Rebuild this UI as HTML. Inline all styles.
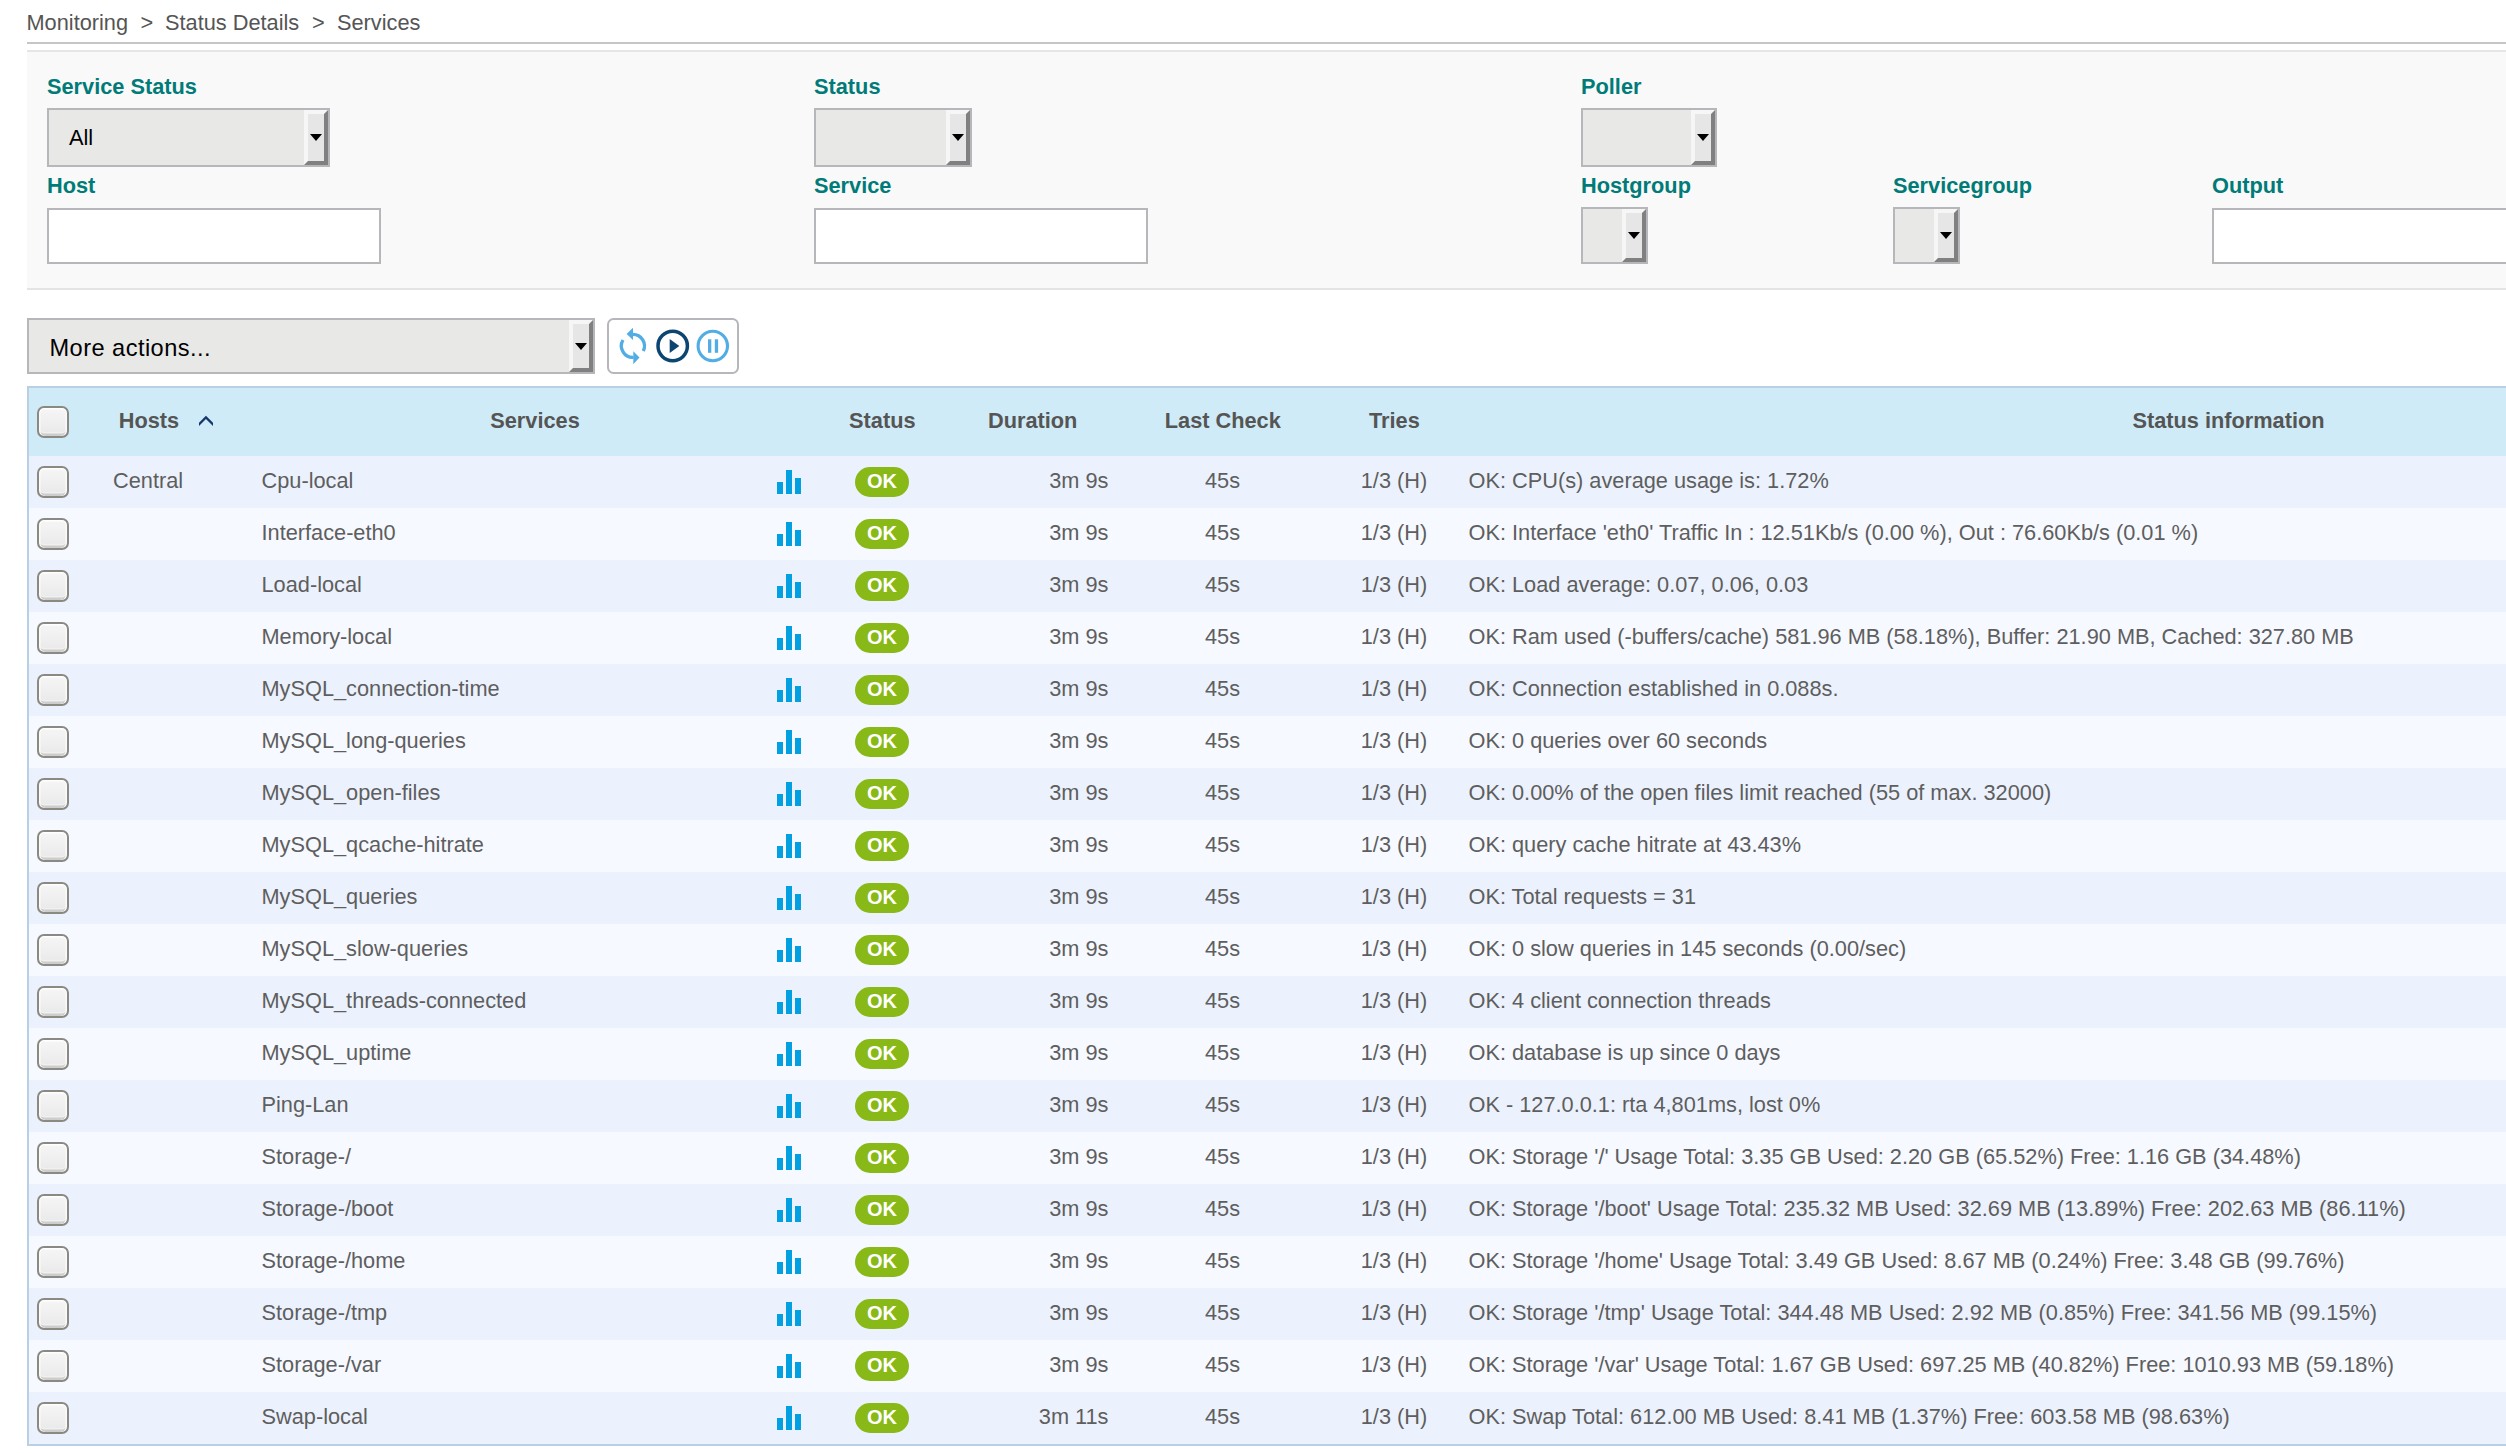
<!DOCTYPE html><html><head><meta charset='utf-8'><style>
*{margin:0;padding:0;box-sizing:border-box}
html,body{width:2506px;height:1453px;overflow:hidden;background:#fff}
body{position:relative;font-family:"Liberation Sans",sans-serif;font-size:21.75px;color:#5e5e5e}
.a{position:absolute;white-space:nowrap}
.lbl{position:absolute;white-space:nowrap;font-weight:bold;color:#007b78;line-height:24px}
.sel{position:absolute;background:#e8e8e7;border:2.5px solid #b5b7bb}
.sel .btn{position:absolute;right:0;top:0;bottom:0;width:24px;background:#e6e6e6;border-style:solid;border-width:4px 4px 4px 4px;border-color:#f6f6f6 #808080 #808080 #f6f6f6}
.sel .arr{position:absolute;left:50%;top:50%;margin-left:-6.5px;margin-top:-3.5px;width:0;height:0;border-left:6.5px solid transparent;border-right:6.5px solid transparent;border-top:7.5px solid #000}
.inp{position:absolute;background:#fff;border:2.5px solid #b5b7bb}
.cb{position:absolute;width:32px;height:32px;border:2.2px solid #8a8a83;border-radius:7px;background:linear-gradient(#f6f6f6,#eeeeee 60%,#e8e8e8);box-shadow:inset 0 1.5px 0 #fff,inset 1.5px 0 0 #fafafa,inset -1.5px 0 0 #fafafa,inset 0 -2.5px 0 #cdcdcd,inset 0 -4px 0 #f0f0f0}
.row{position:absolute;left:29px;width:2477px;height:52px}
.t{position:absolute;white-space:nowrap;line-height:24px}
.hd{position:absolute;white-space:nowrap;line-height:24px;font-weight:bold;color:#555}
.ok{position:absolute;width:54px;height:30px;border-radius:15px;background:#88b917;color:#fff;font-weight:bold;font-size:20px;line-height:28.5px;text-align:center}
.bars{position:absolute;width:24px;height:24px}
.bars i{position:absolute;bottom:0;width:6px;background:#02a0e0}
</style></head><body>
<div class='a' style='left:26.5px;top:11px;line-height:24px;color:#555'>Monitoring</div>
<div class='a' style='left:140.5px;top:11px;line-height:24px;color:#555'>&gt;</div>
<div class='a' style='left:165px;top:11px;line-height:24px;color:#555'>Status Details</div>
<div class='a' style='left:312px;top:11px;line-height:24px;color:#555'>&gt;</div>
<div class='a' style='left:337px;top:11px;line-height:24px;color:#555'>Services</div>
<div class='a' style='left:27px;top:42px;width:2479px;height:2px;background:#c6c6c6'></div>
<div class='a' style='left:27px;top:50px;width:2479px;height:240px;background:#f9f9f9;border-top:2px solid #e6e6e6;border-bottom:2px solid #e4e4e4'></div>
<div class='lbl' style='left:47px;top:75px'>Service Status</div>
<div class='lbl' style='left:814px;top:75px'>Status</div>
<div class='lbl' style='left:1581px;top:75px'>Poller</div>
<div class='lbl' style='left:47px;top:174px'>Host</div>
<div class='lbl' style='left:814px;top:174px'>Service</div>
<div class='lbl' style='left:1581px;top:174px'>Hostgroup</div>
<div class='lbl' style='left:1893px;top:174px'>Servicegroup</div>
<div class='lbl' style='left:2212px;top:174px'>Output</div>
<div class='sel' style='left:47px;top:108px;width:283px;height:59px'><div class='t' style='left:20px;top:16.0px;color:#000'>All</div><div class='btn'><div class='arr'></div></div></div>
<div class='sel' style='left:814px;top:108px;width:158px;height:59px'><div class='btn'><div class='arr'></div></div></div>
<div class='sel' style='left:1581px;top:108px;width:136px;height:59px'><div class='btn'><div class='arr'></div></div></div>
<div class='sel' style='left:1581px;top:207px;width:67px;height:57px'><div class='btn'><div class='arr'></div></div></div>
<div class='sel' style='left:1893px;top:207px;width:67px;height:57px'><div class='btn'><div class='arr'></div></div></div>
<div class='inp' style='left:47px;top:208px;width:334px;height:56px'></div>
<div class='inp' style='left:814px;top:208px;width:334px;height:56px'></div>
<div class='inp' style='left:2212px;top:208px;width:400px;height:56px'></div>
<div class='sel' style='left:27px;top:318px;width:568px;height:56px'><div class='t' style='left:20.5px;top:16px;color:#000;font-size:23.6px;letter-spacing:0.45px'>More actions...</div><div class='btn'><div class='arr'></div></div></div>
<div class='a' style='left:607px;top:318px;width:132px;height:56px;border:2px solid #b5b7bb;border-radius:6.5px;background:#fff'></div>
<svg class='a' style='left:607px;top:318px' width='132' height='56' viewBox='0 0 132 56'>
 <g fill='none' stroke='#52ade4' stroke-width='3.3'>
  <path d='M25.9 16.4 A11.5 11.5 0 0 1 36.2 33.1'/>
  <path d='M26.6 39.4 A11.5 11.5 0 0 1 16.0 22.0'/>
 </g>
 <path d='M26 9.7 L19.6 16.1 L26 22.1 Z' fill='#52ade4'/>
 <path d='M26.3 33.2 L32.5 39.4 L26.3 46.3 Z' fill='#52ade4'/>
 <circle cx='65.7' cy='28' r='14.7' fill='none' stroke='#0c4570' stroke-width='3.5'/>
 <path d='M62.7 21 L72.3 28 L62.7 35 Z' fill='#0c4570'/>
 <circle cx='105.8' cy='28' r='14.7' fill='none' stroke='#52ade4' stroke-width='3.1'/>
 <rect x='101' y='21.3' width='3.3' height='13.5' fill='#52ade4'/>
 <rect x='107.8' y='21.3' width='3.3' height='13.5' fill='#52ade4'/>
</svg>
<div class='a' style='left:27px;top:386px;width:2479px;height:1060px;border-left:2px solid #b9cfe4;border-top:2px solid #b9cfe4;border-bottom:2px solid #b9cfe4;background:#fff'></div>
<div class='a' style='left:29px;top:388px;width:2477px;height:68px;background:#cfebf7'></div>
<div class='cb' style='left:37px;top:406px'></div>
<div class='hd' style='left:118.7px;top:408.6px'>Hosts</div>
<svg class='a' style='left:197px;top:414px' width='18' height='14' viewBox='0 0 18 14'><path d='M2 12 L2 8.7 L8.95 1.7 L16 8.7 L16 12 L8.95 5 Z' fill='#15376c'/></svg>
<div class='hd' style='left:235px;width:600px;text-align:center;top:408.6px'>Services</div>
<div class='hd' style='left:582.3px;width:600px;text-align:center;top:408.6px'>Status</div>
<div class='hd' style='left:732.7px;width:600px;text-align:center;top:408.6px'>Duration</div>
<div class='hd' style='left:922.8px;width:600px;text-align:center;top:408.6px'>Last Check</div>
<div class='hd' style='left:1094.4px;width:600px;text-align:center;top:408.6px'>Tries</div>
<div class='hd' style='left:1928.5px;width:600px;text-align:center;top:408.6px'>Status information</div>
<div class='a' style='left:29px;top:456px;width:2477px;height:52px;background:#ecf2fd'></div>
<div class='cb' style='left:37px;top:466px'></div>
<div class='t' style='left:113px;top:469px'>Central</div>
<div class='t' style='left:261.5px;top:469px'>Cpu-local</div>
<div class='bars' style='left:777px;top:470px'><i style='left:0;height:12px'></i><i style='left:9px;height:24px'></i><i style='left:18px;height:16.5px'></i></div>
<div class='ok' style='left:855px;top:467px'>OK</div>
<div class='t' style='left:900px;width:208.5px;text-align:right;top:469px'>3m 9s</div>
<div class='t' style='left:1122.5px;width:200px;text-align:center;top:469px'>45s</div>
<div class='t' style='left:1294px;width:200px;text-align:center;top:469px'>1/3 (H)</div>
<div class='t' style='left:1468.5px;top:469px'>OK: CPU(s) average usage is: 1.72%</div>
<div class='a' style='left:29px;top:508px;width:2477px;height:52px;background:#f6f9ff'></div>
<div class='cb' style='left:37px;top:518px'></div>
<div class='t' style='left:261.5px;top:521px'>Interface-eth0</div>
<div class='bars' style='left:777px;top:522px'><i style='left:0;height:12px'></i><i style='left:9px;height:24px'></i><i style='left:18px;height:16.5px'></i></div>
<div class='ok' style='left:855px;top:519px'>OK</div>
<div class='t' style='left:900px;width:208.5px;text-align:right;top:521px'>3m 9s</div>
<div class='t' style='left:1122.5px;width:200px;text-align:center;top:521px'>45s</div>
<div class='t' style='left:1294px;width:200px;text-align:center;top:521px'>1/3 (H)</div>
<div class='t' style='left:1468.5px;top:521px'>OK: Interface 'eth0' Traffic In : 12.51Kb/s (0.00 %), Out : 76.60Kb/s (0.01 %)</div>
<div class='a' style='left:29px;top:560px;width:2477px;height:52px;background:#ecf2fd'></div>
<div class='cb' style='left:37px;top:570px'></div>
<div class='t' style='left:261.5px;top:573px'>Load-local</div>
<div class='bars' style='left:777px;top:574px'><i style='left:0;height:12px'></i><i style='left:9px;height:24px'></i><i style='left:18px;height:16.5px'></i></div>
<div class='ok' style='left:855px;top:571px'>OK</div>
<div class='t' style='left:900px;width:208.5px;text-align:right;top:573px'>3m 9s</div>
<div class='t' style='left:1122.5px;width:200px;text-align:center;top:573px'>45s</div>
<div class='t' style='left:1294px;width:200px;text-align:center;top:573px'>1/3 (H)</div>
<div class='t' style='left:1468.5px;top:573px'>OK: Load average: 0.07, 0.06, 0.03</div>
<div class='a' style='left:29px;top:612px;width:2477px;height:52px;background:#f6f9ff'></div>
<div class='cb' style='left:37px;top:622px'></div>
<div class='t' style='left:261.5px;top:625px'>Memory-local</div>
<div class='bars' style='left:777px;top:626px'><i style='left:0;height:12px'></i><i style='left:9px;height:24px'></i><i style='left:18px;height:16.5px'></i></div>
<div class='ok' style='left:855px;top:623px'>OK</div>
<div class='t' style='left:900px;width:208.5px;text-align:right;top:625px'>3m 9s</div>
<div class='t' style='left:1122.5px;width:200px;text-align:center;top:625px'>45s</div>
<div class='t' style='left:1294px;width:200px;text-align:center;top:625px'>1/3 (H)</div>
<div class='t' style='left:1468.5px;top:625px'>OK: Ram used (-buffers/cache) 581.96 MB (58.18%), Buffer: 21.90 MB, Cached: 327.80 MB</div>
<div class='a' style='left:29px;top:664px;width:2477px;height:52px;background:#ecf2fd'></div>
<div class='cb' style='left:37px;top:674px'></div>
<div class='t' style='left:261.5px;top:677px'>MySQL_connection-time</div>
<div class='bars' style='left:777px;top:678px'><i style='left:0;height:12px'></i><i style='left:9px;height:24px'></i><i style='left:18px;height:16.5px'></i></div>
<div class='ok' style='left:855px;top:675px'>OK</div>
<div class='t' style='left:900px;width:208.5px;text-align:right;top:677px'>3m 9s</div>
<div class='t' style='left:1122.5px;width:200px;text-align:center;top:677px'>45s</div>
<div class='t' style='left:1294px;width:200px;text-align:center;top:677px'>1/3 (H)</div>
<div class='t' style='left:1468.5px;top:677px'>OK: Connection established in 0.088s.</div>
<div class='a' style='left:29px;top:716px;width:2477px;height:52px;background:#f6f9ff'></div>
<div class='cb' style='left:37px;top:726px'></div>
<div class='t' style='left:261.5px;top:729px'>MySQL_long-queries</div>
<div class='bars' style='left:777px;top:730px'><i style='left:0;height:12px'></i><i style='left:9px;height:24px'></i><i style='left:18px;height:16.5px'></i></div>
<div class='ok' style='left:855px;top:727px'>OK</div>
<div class='t' style='left:900px;width:208.5px;text-align:right;top:729px'>3m 9s</div>
<div class='t' style='left:1122.5px;width:200px;text-align:center;top:729px'>45s</div>
<div class='t' style='left:1294px;width:200px;text-align:center;top:729px'>1/3 (H)</div>
<div class='t' style='left:1468.5px;top:729px'>OK: 0 queries over 60 seconds</div>
<div class='a' style='left:29px;top:768px;width:2477px;height:52px;background:#ecf2fd'></div>
<div class='cb' style='left:37px;top:778px'></div>
<div class='t' style='left:261.5px;top:781px'>MySQL_open-files</div>
<div class='bars' style='left:777px;top:782px'><i style='left:0;height:12px'></i><i style='left:9px;height:24px'></i><i style='left:18px;height:16.5px'></i></div>
<div class='ok' style='left:855px;top:779px'>OK</div>
<div class='t' style='left:900px;width:208.5px;text-align:right;top:781px'>3m 9s</div>
<div class='t' style='left:1122.5px;width:200px;text-align:center;top:781px'>45s</div>
<div class='t' style='left:1294px;width:200px;text-align:center;top:781px'>1/3 (H)</div>
<div class='t' style='left:1468.5px;top:781px'>OK: 0.00% of the open files limit reached (55 of max. 32000)</div>
<div class='a' style='left:29px;top:820px;width:2477px;height:52px;background:#f6f9ff'></div>
<div class='cb' style='left:37px;top:830px'></div>
<div class='t' style='left:261.5px;top:833px'>MySQL_qcache-hitrate</div>
<div class='bars' style='left:777px;top:834px'><i style='left:0;height:12px'></i><i style='left:9px;height:24px'></i><i style='left:18px;height:16.5px'></i></div>
<div class='ok' style='left:855px;top:831px'>OK</div>
<div class='t' style='left:900px;width:208.5px;text-align:right;top:833px'>3m 9s</div>
<div class='t' style='left:1122.5px;width:200px;text-align:center;top:833px'>45s</div>
<div class='t' style='left:1294px;width:200px;text-align:center;top:833px'>1/3 (H)</div>
<div class='t' style='left:1468.5px;top:833px'>OK: query cache hitrate at 43.43%</div>
<div class='a' style='left:29px;top:872px;width:2477px;height:52px;background:#ecf2fd'></div>
<div class='cb' style='left:37px;top:882px'></div>
<div class='t' style='left:261.5px;top:885px'>MySQL_queries</div>
<div class='bars' style='left:777px;top:886px'><i style='left:0;height:12px'></i><i style='left:9px;height:24px'></i><i style='left:18px;height:16.5px'></i></div>
<div class='ok' style='left:855px;top:883px'>OK</div>
<div class='t' style='left:900px;width:208.5px;text-align:right;top:885px'>3m 9s</div>
<div class='t' style='left:1122.5px;width:200px;text-align:center;top:885px'>45s</div>
<div class='t' style='left:1294px;width:200px;text-align:center;top:885px'>1/3 (H)</div>
<div class='t' style='left:1468.5px;top:885px'>OK: Total requests = 31</div>
<div class='a' style='left:29px;top:924px;width:2477px;height:52px;background:#f6f9ff'></div>
<div class='cb' style='left:37px;top:934px'></div>
<div class='t' style='left:261.5px;top:937px'>MySQL_slow-queries</div>
<div class='bars' style='left:777px;top:938px'><i style='left:0;height:12px'></i><i style='left:9px;height:24px'></i><i style='left:18px;height:16.5px'></i></div>
<div class='ok' style='left:855px;top:935px'>OK</div>
<div class='t' style='left:900px;width:208.5px;text-align:right;top:937px'>3m 9s</div>
<div class='t' style='left:1122.5px;width:200px;text-align:center;top:937px'>45s</div>
<div class='t' style='left:1294px;width:200px;text-align:center;top:937px'>1/3 (H)</div>
<div class='t' style='left:1468.5px;top:937px'>OK: 0 slow queries in 145 seconds (0.00/sec)</div>
<div class='a' style='left:29px;top:976px;width:2477px;height:52px;background:#ecf2fd'></div>
<div class='cb' style='left:37px;top:986px'></div>
<div class='t' style='left:261.5px;top:989px'>MySQL_threads-connected</div>
<div class='bars' style='left:777px;top:990px'><i style='left:0;height:12px'></i><i style='left:9px;height:24px'></i><i style='left:18px;height:16.5px'></i></div>
<div class='ok' style='left:855px;top:987px'>OK</div>
<div class='t' style='left:900px;width:208.5px;text-align:right;top:989px'>3m 9s</div>
<div class='t' style='left:1122.5px;width:200px;text-align:center;top:989px'>45s</div>
<div class='t' style='left:1294px;width:200px;text-align:center;top:989px'>1/3 (H)</div>
<div class='t' style='left:1468.5px;top:989px'>OK: 4 client connection threads</div>
<div class='a' style='left:29px;top:1028px;width:2477px;height:52px;background:#f6f9ff'></div>
<div class='cb' style='left:37px;top:1038px'></div>
<div class='t' style='left:261.5px;top:1041px'>MySQL_uptime</div>
<div class='bars' style='left:777px;top:1042px'><i style='left:0;height:12px'></i><i style='left:9px;height:24px'></i><i style='left:18px;height:16.5px'></i></div>
<div class='ok' style='left:855px;top:1039px'>OK</div>
<div class='t' style='left:900px;width:208.5px;text-align:right;top:1041px'>3m 9s</div>
<div class='t' style='left:1122.5px;width:200px;text-align:center;top:1041px'>45s</div>
<div class='t' style='left:1294px;width:200px;text-align:center;top:1041px'>1/3 (H)</div>
<div class='t' style='left:1468.5px;top:1041px'>OK: database is up since 0 days</div>
<div class='a' style='left:29px;top:1080px;width:2477px;height:52px;background:#ecf2fd'></div>
<div class='cb' style='left:37px;top:1090px'></div>
<div class='t' style='left:261.5px;top:1093px'>Ping-Lan</div>
<div class='bars' style='left:777px;top:1094px'><i style='left:0;height:12px'></i><i style='left:9px;height:24px'></i><i style='left:18px;height:16.5px'></i></div>
<div class='ok' style='left:855px;top:1091px'>OK</div>
<div class='t' style='left:900px;width:208.5px;text-align:right;top:1093px'>3m 9s</div>
<div class='t' style='left:1122.5px;width:200px;text-align:center;top:1093px'>45s</div>
<div class='t' style='left:1294px;width:200px;text-align:center;top:1093px'>1/3 (H)</div>
<div class='t' style='left:1468.5px;top:1093px'>OK - 127.0.0.1: rta 4,801ms, lost 0%</div>
<div class='a' style='left:29px;top:1132px;width:2477px;height:52px;background:#f6f9ff'></div>
<div class='cb' style='left:37px;top:1142px'></div>
<div class='t' style='left:261.5px;top:1145px'>Storage-/</div>
<div class='bars' style='left:777px;top:1146px'><i style='left:0;height:12px'></i><i style='left:9px;height:24px'></i><i style='left:18px;height:16.5px'></i></div>
<div class='ok' style='left:855px;top:1143px'>OK</div>
<div class='t' style='left:900px;width:208.5px;text-align:right;top:1145px'>3m 9s</div>
<div class='t' style='left:1122.5px;width:200px;text-align:center;top:1145px'>45s</div>
<div class='t' style='left:1294px;width:200px;text-align:center;top:1145px'>1/3 (H)</div>
<div class='t' style='left:1468.5px;top:1145px'>OK: Storage '/' Usage Total: 3.35 GB Used: 2.20 GB (65.52%) Free: 1.16 GB (34.48%)</div>
<div class='a' style='left:29px;top:1184px;width:2477px;height:52px;background:#ecf2fd'></div>
<div class='cb' style='left:37px;top:1194px'></div>
<div class='t' style='left:261.5px;top:1197px'>Storage-/boot</div>
<div class='bars' style='left:777px;top:1198px'><i style='left:0;height:12px'></i><i style='left:9px;height:24px'></i><i style='left:18px;height:16.5px'></i></div>
<div class='ok' style='left:855px;top:1195px'>OK</div>
<div class='t' style='left:900px;width:208.5px;text-align:right;top:1197px'>3m 9s</div>
<div class='t' style='left:1122.5px;width:200px;text-align:center;top:1197px'>45s</div>
<div class='t' style='left:1294px;width:200px;text-align:center;top:1197px'>1/3 (H)</div>
<div class='t' style='left:1468.5px;top:1197px'>OK: Storage '/boot' Usage Total: 235.32 MB Used: 32.69 MB (13.89%) Free: 202.63 MB (86.11%)</div>
<div class='a' style='left:29px;top:1236px;width:2477px;height:52px;background:#f6f9ff'></div>
<div class='cb' style='left:37px;top:1246px'></div>
<div class='t' style='left:261.5px;top:1249px'>Storage-/home</div>
<div class='bars' style='left:777px;top:1250px'><i style='left:0;height:12px'></i><i style='left:9px;height:24px'></i><i style='left:18px;height:16.5px'></i></div>
<div class='ok' style='left:855px;top:1247px'>OK</div>
<div class='t' style='left:900px;width:208.5px;text-align:right;top:1249px'>3m 9s</div>
<div class='t' style='left:1122.5px;width:200px;text-align:center;top:1249px'>45s</div>
<div class='t' style='left:1294px;width:200px;text-align:center;top:1249px'>1/3 (H)</div>
<div class='t' style='left:1468.5px;top:1249px'>OK: Storage '/home' Usage Total: 3.49 GB Used: 8.67 MB (0.24%) Free: 3.48 GB (99.76%)</div>
<div class='a' style='left:29px;top:1288px;width:2477px;height:52px;background:#ecf2fd'></div>
<div class='cb' style='left:37px;top:1298px'></div>
<div class='t' style='left:261.5px;top:1301px'>Storage-/tmp</div>
<div class='bars' style='left:777px;top:1302px'><i style='left:0;height:12px'></i><i style='left:9px;height:24px'></i><i style='left:18px;height:16.5px'></i></div>
<div class='ok' style='left:855px;top:1299px'>OK</div>
<div class='t' style='left:900px;width:208.5px;text-align:right;top:1301px'>3m 9s</div>
<div class='t' style='left:1122.5px;width:200px;text-align:center;top:1301px'>45s</div>
<div class='t' style='left:1294px;width:200px;text-align:center;top:1301px'>1/3 (H)</div>
<div class='t' style='left:1468.5px;top:1301px'>OK: Storage '/tmp' Usage Total: 344.48 MB Used: 2.92 MB (0.85%) Free: 341.56 MB (99.15%)</div>
<div class='a' style='left:29px;top:1340px;width:2477px;height:52px;background:#f6f9ff'></div>
<div class='cb' style='left:37px;top:1350px'></div>
<div class='t' style='left:261.5px;top:1353px'>Storage-/var</div>
<div class='bars' style='left:777px;top:1354px'><i style='left:0;height:12px'></i><i style='left:9px;height:24px'></i><i style='left:18px;height:16.5px'></i></div>
<div class='ok' style='left:855px;top:1351px'>OK</div>
<div class='t' style='left:900px;width:208.5px;text-align:right;top:1353px'>3m 9s</div>
<div class='t' style='left:1122.5px;width:200px;text-align:center;top:1353px'>45s</div>
<div class='t' style='left:1294px;width:200px;text-align:center;top:1353px'>1/3 (H)</div>
<div class='t' style='left:1468.5px;top:1353px'>OK: Storage '/var' Usage Total: 1.67 GB Used: 697.25 MB (40.82%) Free: 1010.93 MB (59.18%)</div>
<div class='a' style='left:29px;top:1392px;width:2477px;height:52px;background:#ecf2fd'></div>
<div class='cb' style='left:37px;top:1402px'></div>
<div class='t' style='left:261.5px;top:1405px'>Swap-local</div>
<div class='bars' style='left:777px;top:1406px'><i style='left:0;height:12px'></i><i style='left:9px;height:24px'></i><i style='left:18px;height:16.5px'></i></div>
<div class='ok' style='left:855px;top:1403px'>OK</div>
<div class='t' style='left:900px;width:208.5px;text-align:right;top:1405px'>3m 11s</div>
<div class='t' style='left:1122.5px;width:200px;text-align:center;top:1405px'>45s</div>
<div class='t' style='left:1294px;width:200px;text-align:center;top:1405px'>1/3 (H)</div>
<div class='t' style='left:1468.5px;top:1405px'>OK: Swap Total: 612.00 MB Used: 8.41 MB (1.37%) Free: 603.58 MB (98.63%)</div>
</body></html>
